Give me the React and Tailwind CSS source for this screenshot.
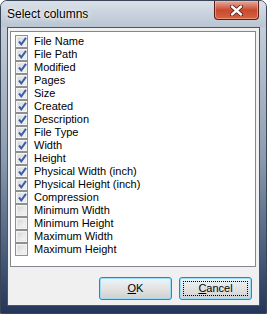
import { useState } from "react";

const COLUMNS = [
  ["File Name", true],
  ["File Path", true],
  ["Modified", true],
  ["Pages", true],
  ["Size", true],
  ["Created", true],
  ["Description", true],
  ["File Type", true],
  ["Width", true],
  ["Height", true],
  ["Physical Width (inch)", true],
  ["Physical Height (inch)", true],
  ["Compression", true],
  ["Minimum Width", false],
  ["Minimum Height", false],
  ["Maximum Width", false],
  ["Maximum Height", false],
];

function CheckBox({ checked }) {
  return (
    <div className="w-[13px] h-[13px] border border-[#8e8f8f] bg-[#f4f4f4] p-[1px] shrink-0">
      <div className="relative w-full h-full bg-gradient-to-br from-[#d5d8dc] to-[#f7f7f7] border border-[#e8e8e8]">
        {checked && (
          <svg
            className="absolute left-[-1px] top-[-2px]"
            width="11"
            height="11"
            viewBox="0 0 11 11"
          >
            <path
              d="M2 5.5 L4.3 8.3 L9 1.8"
              fill="none"
              stroke="#3f5ea8"
              strokeWidth="2"
            />
          </svg>
        )}
      </div>
    </div>
  );
}

export default function App() {
  const [cols, setCols] = useState(COLUMNS);

  const toggle = (i) =>
    setCols(cols.map((c, j) => (j === i ? [c[0], !c[1]] : c)));

  return (
    <div
      className="relative w-[267px] h-[314px] flex flex-col rounded-t-[7px] border border-[#3a4658] bg-gradient-to-b from-[#cfd8e1] via-[#8c9cb0] to-[#24375a] overflow-hidden"
      style={{ fontFamily: '"Liberation Sans", Arial, sans-serif' }}
    >
      <div className="h-[26px] shrink-0 flex items-center pl-[6px] bg-gradient-to-b from-[#d9e0e8] to-[#b9c5d2]">
        <span
          className="text-[12px] text-black"
          style={{ textShadow: "0 0 6px #ffffff, 0 0 3px #ffffff" }}
        >
          Select columns
        </span>
      </div>

      <div className="absolute top-0 right-[7px] w-[45px] h-[19px] rounded-b-[4px] border border-t-0 border-[#5b1e16] bg-gradient-to-b from-[#e9a99a] via-[#c84a30] to-[#d8623d] flex items-center justify-center shadow-[inset_0_0_0_1px_rgba(255,200,180,0.5)]">
        <svg width="13" height="11" viewBox="0 0 13 11">
          <path
            d="M2 1.5 L11 9.5 M11 1.5 L2 9.5"
            stroke="#4a1a12"
            strokeWidth="4"
            strokeLinecap="round"
          />
          <path
            d="M2 1.5 L11 9.5 M11 1.5 L2 9.5"
            stroke="#ffffff"
            strokeWidth="2.4"
            strokeLinecap="round"
          />
        </svg>
      </div>

      <div className="mx-[6px] mb-[7px] flex-1 flex flex-col border border-[#4a5568] bg-[#f0f0f0]">
        <div className="mt-[3px] ml-[2px] w-[246px] h-[236px] border border-[#828790] bg-white pt-[3px] pl-[4px]">
          {cols.map(([name, checked], i) => (
            <div
              key={name}
              className="h-[13px] flex items-center gap-[6px] cursor-default"
              onClick={() => toggle(i)}
            >
              <CheckBox checked={checked} />
              <span className="text-[11px] leading-none text-black whitespace-nowrap">
                {name}
              </span>
            </div>
          ))}
        </div>

        <div className="mt-[10px] flex justify-end gap-[7px] pr-[7px]">
          <button className="w-[73px] h-[23px] rounded-[3px] border border-[#3c7fb1] bg-gradient-to-b from-[#eaf6fd] via-[#e3e3e3] to-[#d0d0d0] shadow-[inset_0_0_0_1px_#9fdcf8] text-[11px] text-black">
            <span className="underline underline-offset-1">O</span>K
          </button>
          <button className="w-[73px] h-[23px] rounded-[3px] border border-[#3c7fb1] bg-gradient-to-b from-[#eaf6fd] via-[#e3e3e3] to-[#d0d0d0] shadow-[inset_0_0_0_1px_#9fdcf8] text-[11px] text-black p-[3px]">
            <span className="flex w-full h-full items-center justify-center border border-dotted border-black">
              <span className="underline underline-offset-1">C</span>ancel
            </span>
          </button>
        </div>
      </div>
    </div>
  );
}
